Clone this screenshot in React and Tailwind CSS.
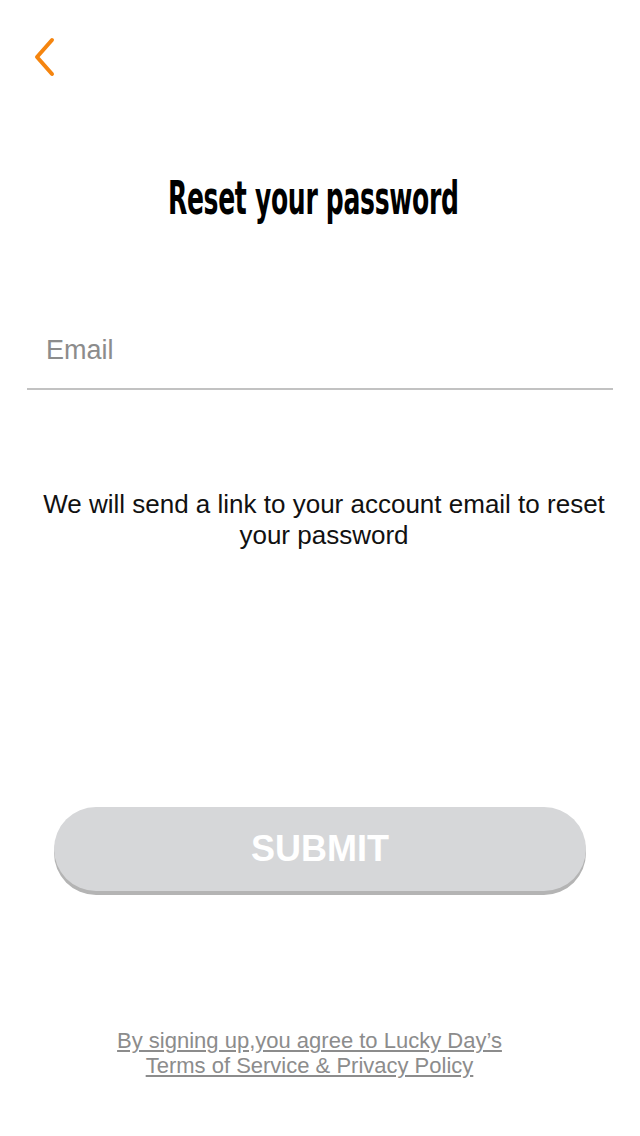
import React, { useState } from 'react';

const BackIcon = () => (
  <svg width="28" height="44" viewBox="0 0 28 44" fill="none">
    <path d="M22 4 L7 21 L22 38" stroke="#f5850f" strokeWidth="4" strokeLinecap="round" strokeLinejoin="round" />
  </svg>
);

export default function App() {
  const [email, setEmail] = useState('');

  return (
    <div className="w-[640px] h-[1136px] bg-white flex flex-col" style={{ fontFamily: '"Liberation Sans", Arial, sans-serif' }}>
      {/* Back */}
      <div className="pt-[36px] pl-[30px] h-[80px]">
        <button className="block">
          <BackIcon />
        </button>
      </div>

      {/* Title */}
      <h1 className="mt-[94px] h-[48px] pr-[14px] text-center text-[46px] leading-[48px] font-bold text-black whitespace-nowrap">
        <span
          className="inline-block scale-x-[0.605] tracking-[-0.5px]"
          style={{ fontFamily: '"DejaVu Sans Condensed", "DejaVu Sans", sans-serif' }}
        >
          Reset your password
        </span>
      </h1>

      {/* Email */}
      <div className="mt-[103px] mx-[27px] pb-[13px] border-b-2 border-[#c2c2c2]">
        <input
          type="email"
          value={email}
          onChange={e => setEmail(e.target.value)}
          placeholder="Email"
          className="w-full h-[50px] pl-[19px] pr-[20px] text-[27px] text-gray-800 placeholder-[#8c8c8c] outline-none bg-transparent"
        />
      </div>

      {/* Info */}
      <p className="mt-[99px] pl-[34px] pr-[26px] text-center text-[26px] leading-[31px] text-[#111]">
        We will send a link to your account email to reset your password
      </p>

      {/* Submit */}
      <div className="mt-[256px] px-[54px]">
        <button className="w-full h-[84px] rounded-full bg-[#d6d7d9] shadow-[0_4px_0_#b4b4b4] text-white text-[36px] font-bold">
          SUBMIT
        </button>
      </div>

      {/* Footer */}
      <div className="mt-[137px] pr-[21px] text-center text-[22px] leading-[25px] text-[#8c8c8c] underline">
        <p>By signing up,you agree to Lucky Day’s</p>
        <p>Terms of Service &amp; Privacy Policy</p>
      </div>
    </div>
  );
}
